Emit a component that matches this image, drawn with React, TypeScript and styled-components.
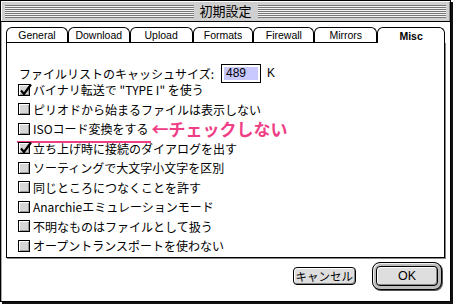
import React from 'react';
import styled, { createGlobalStyle } from 'styled-components';

const Global = createGlobalStyle`
  html, body { margin: 0; padding: 0; background: #fff; }
  body {
    width: 453px;
    height: 304px;
    overflow: hidden;
    font-family: "Noto Sans CJK JP", "Liberation Sans", sans-serif;
    color: #000;
  }
`;

const Window = styled.div`
  width: 451px;
  height: 302px;
  box-sizing: border-box;
  border: 1px solid #000;
  box-shadow: 2px 2px 0 #111;
  background: #fff;
  display: flex;
  flex-direction: column;
`;

const TitleBar = styled.div`
  height: 20px;
  flex: none;
  background: #cfcfcf;
  border-bottom: 1px solid #000;
  box-shadow: inset 1px 1px 0 #fff, inset -1px 0 0 #888;
  display: flex;
  align-items: center;
  gap: 5px;
  padding: 0 4px;
`;

const Stripes = styled.div`
  flex: 1;
  height: 13px;
  background: repeating-linear-gradient(to bottom, #777 0 1px, #f2f2f2 1px 2px);
`;

const Title = styled.span`
  font-size: 13px;
  line-height: 20px;
  padding: 0 1px;
`;

const Body = styled.div`
  flex: 1;
  padding: 5px 5px 0 5px;
  box-shadow: inset 1px 0 0 #aaa;
`;

const TabRow = styled.div`
  display: flex;
  height: 15px;
  position: relative;
  z-index: 1;
`;

const Tab = styled.div<{ $w: number; $active?: boolean }>`
  width: ${p => p.$w}px;
  box-sizing: border-box;
  height: ${p => (p.$active ? 16 : 15)}px;
  border: 1px solid #000;
  border-bottom: none;
  border-radius: 6px 6px 0 0;
  background: #fff;
  font-family: "Liberation Sans", Arial, sans-serif;
  font-size: 10.5px;
  font-weight: ${p => (p.$active ? 700 : 400)};
  display: flex;
  align-items: center;
  justify-content: center;
  line-height: 1;
  padding-top: 1px;
`;

const Panel = styled.div`
  height: 216px;
  box-sizing: border-box;
  border: 1px solid #000;
  box-shadow: 1px 1px 0 #888;
  padding: 23px 11px 0 11px;
`;

const FieldRow = styled.div`
  height: 14px;
  display: flex;
  align-items: center;
  font-size: 12px;
  margin-left: 1px;
`;

const FieldLabel = styled.span`
  flex: none;
  white-space: nowrap;
`;

const NumberBox = styled.div`
  flex: none;
  width: 40px;
  height: 19px;
  box-sizing: border-box;
  border: 1px solid #000;
  padding: 2px;
  margin: 0 6px 0 7px;
  display: flex;
`;

const Selected = styled.span`
  background: #c9c9ff;
  flex: 1;
  font-family: "Liberation Sans", Arial, sans-serif;
  font-size: 12px;
  line-height: 13px;
  padding-left: 2px;
`;

const Unit = styled.span`
  font-family: "Liberation Sans", Arial, sans-serif;
  font-size: 12px;
`;

const CheckRow = styled.div`
  height: 19.5px;
  display: flex;
  align-items: center;
  font-size: 12px;
  white-space: nowrap;
`;

const Marked = styled.span<{ $underline?: boolean }>`
  display: inline-flex;
  align-items: center;
  gap: 3px;
  position: relative;
  &::after {
    content: '';
    display: ${p => (p.$underline ? 'block' : 'none')};
    position: absolute;
    left: -1px;
    right: -2px;
    bottom: -6px;
    height: 2px;
    background: #ef3d86;
  }
`;

const Box = styled.span`
  width: 12px;
  height: 12px;
  box-sizing: border-box;
  border: 1px solid #000;
  background: #d6d6d6;
  box-shadow: inset 1px 1px 0 #fff, inset -1px -1px 0 #9a9a9a;
  position: relative;
  flex: none;
`;

const Tick = styled.svg`
  position: absolute;
  left: 0;
  top: -2px;
`;

const Note = styled.span`
  color: #ef3d86;
  font-weight: 700;
  font-size: 17px;
  margin-left: 3px;
`;

const ButtonRow = styled.div`
  height: 28px;
  margin-top: 4px;
  display: flex;
  justify-content: flex-end;
  align-items: center;
  gap: 16px;
  padding-right: 3px;
`;

const Button = styled.div`
  height: 18px;
  box-sizing: border-box;
  border: 1px solid #000;
  border-radius: 4px;
  background: #dedede;
  box-shadow: inset 1px 1px 0 #fff, inset -1px -1px 0 #888;
  font-size: 11.5px;
  display: flex;
  align-items: center;
  justify-content: center;
  padding: 0 2px;
`;

const DefaultRing = styled.div`
  width: 70px;
  height: 28px;
  box-sizing: border-box;
  border: 1px solid #000;
  border-radius: 8px;
  background: #bdbdbd;
  box-shadow: inset 1px 1px 0 #eee, 1px 1px 0 #555;
  padding: 3px;
  display: flex;
`;

const OkButton = styled(Button)`
  flex: 1;
  height: auto;
  font-family: "Liberation Sans", Arial, sans-serif;
  font-size: 12.5px;
`;

const tabs = [
  { label: 'General', w: 62 },
  { label: 'Download', w: 62 },
  { label: 'Upload', w: 63 },
  { label: 'Formats', w: 61 },
  { label: 'Firewall', w: 61 },
  { label: 'Mirrors', w: 63 },
  { label: 'Misc', w: 68, active: true },
];

const options = [
  { text: 'バイナリ転送で "TYPE I" を使う', checked: true },
  { text: 'ピリオドから始まるファイルは表示しない' },
  { text: 'ISOコード変換をする', note: '←チェックしない' },
  { text: '立ち上げ時に接続のダイアログを出す', checked: true },
  { text: 'ソーティングで大文字小文字を区別' },
  { text: '同じところにつなくことを許す' },
  { text: 'Anarchieエミュレーションモード' },
  { text: '不明なものはファイルとして扱う' },
  { text: 'オープントランスポートを使わない' },
];

const Checkbox = ({ checked }: { checked?: boolean }) => (
  <Box>
    {checked && (
      <Tick width="13" height="13" viewBox="0 0 13 13">
        <path d="M2 7.5 L5 11 L12 1.5" fill="none" stroke="#000" strokeWidth="2.2" />
      </Tick>
    )}
  </Box>
);

export default function App() {
  return (
    <>
      <Global />
      <Window>
        <TitleBar>
          <Stripes />
          <Title>初期設定</Title>
          <Stripes />
        </TitleBar>
        <Body>
          <TabRow>
            {tabs.map(t => (
              <Tab key={t.label} $w={t.w} $active={t.active}>{t.label}</Tab>
            ))}
          </TabRow>
          <Panel>
            <FieldRow>
              <FieldLabel>ファイルリストのキャッシュサイズ:</FieldLabel>
              <NumberBox><Selected>489</Selected></NumberBox>
              <Unit>K</Unit>
            </FieldRow>
            {options.map(o => (
              <CheckRow key={o.text}>
                <Marked $underline={!!o.note}>
                  <Checkbox checked={o.checked} />
                  {o.text}
                </Marked>
                {o.note && <Note>{o.note}</Note>}
              </CheckRow>
            ))}
          </Panel>
          <ButtonRow>
            <Button>キャンセル</Button>
            <DefaultRing><OkButton>OK</OkButton></DefaultRing>
          </ButtonRow>
        </Body>
      </Window>
    </>
  );
}
